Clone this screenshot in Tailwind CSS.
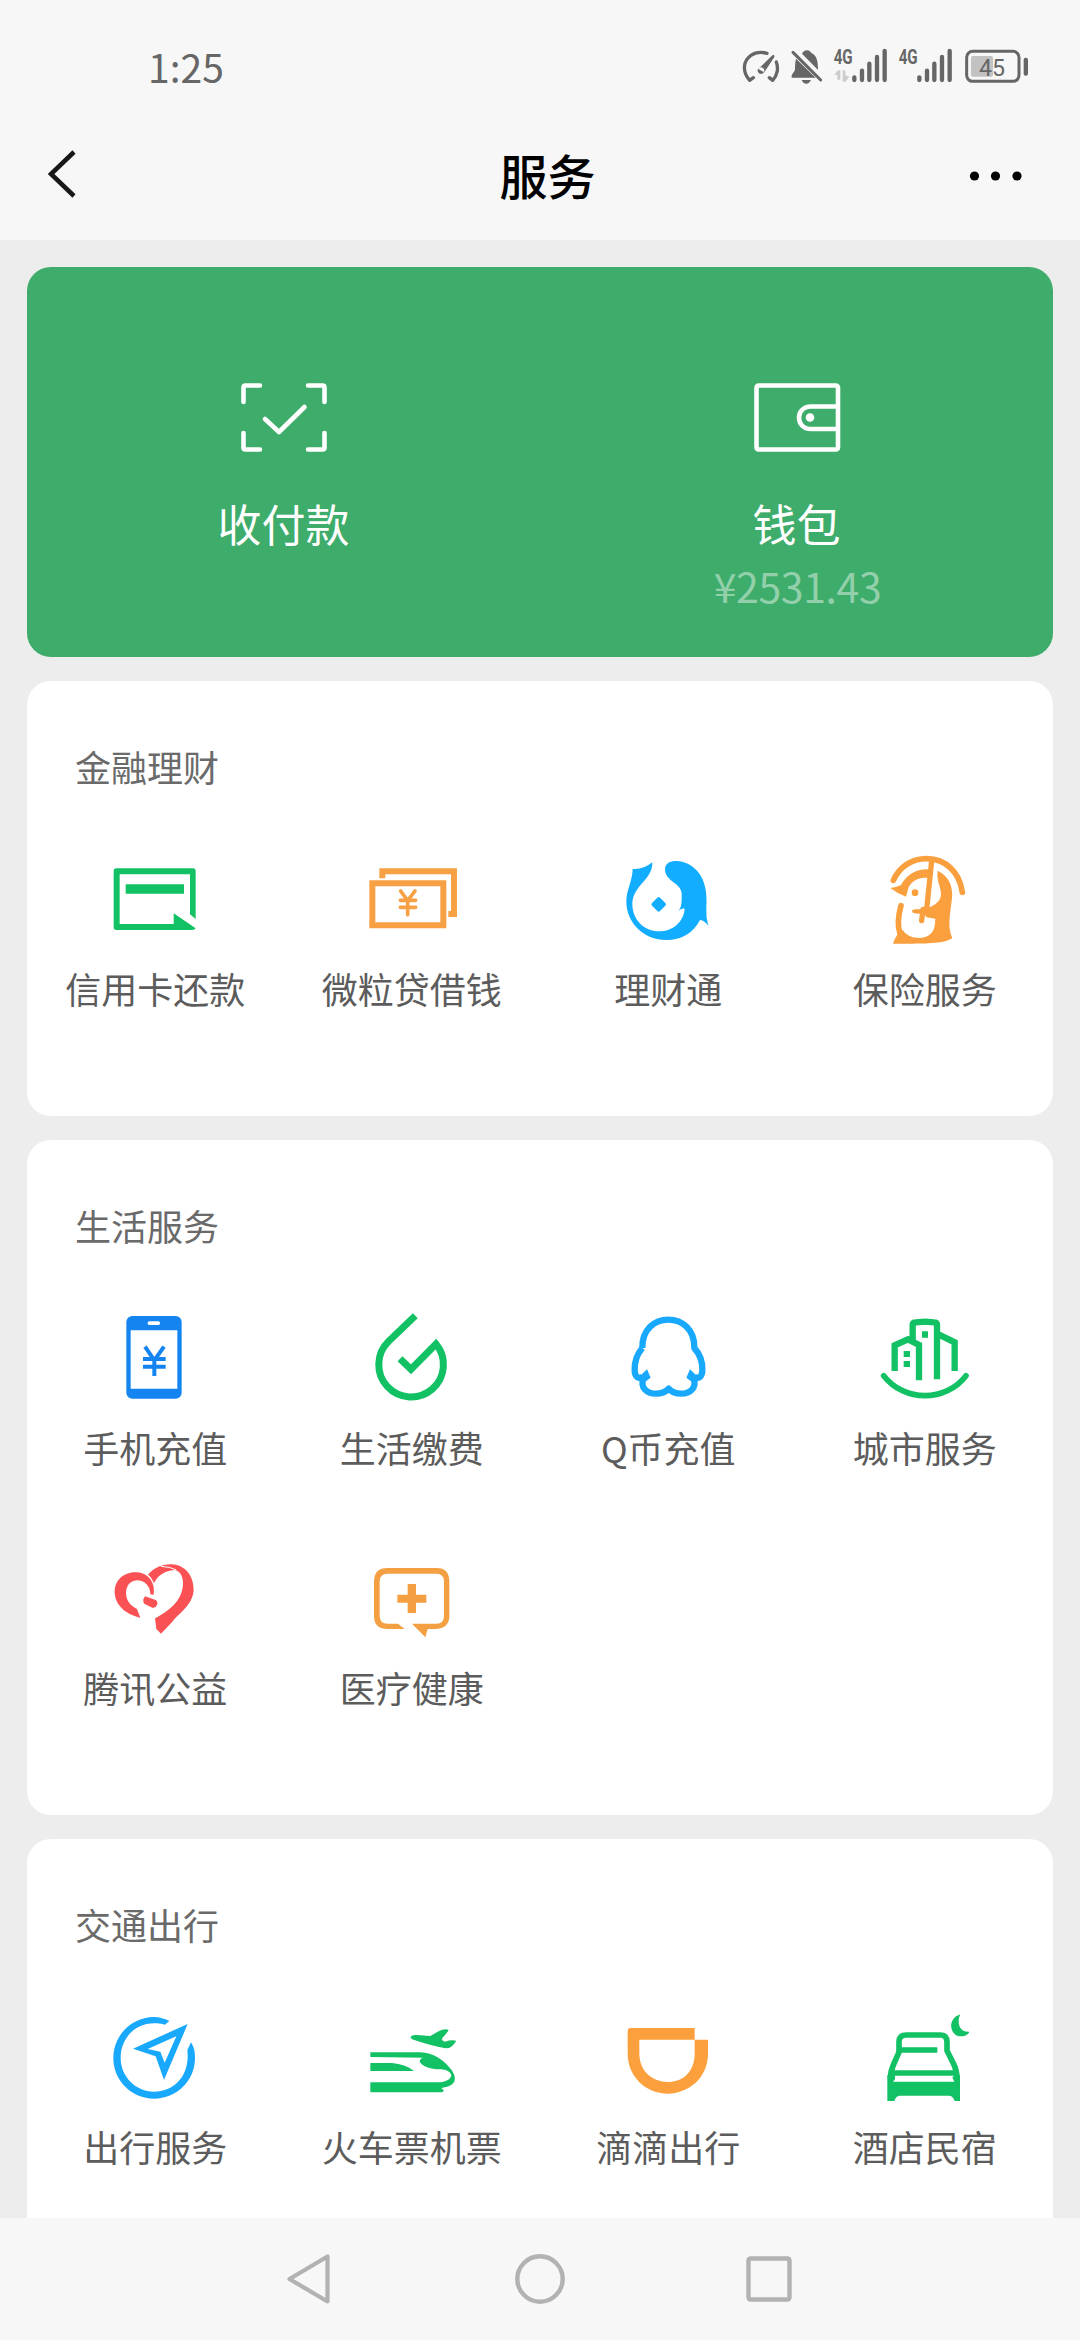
<!DOCTYPE html>
<html lang="zh-CN">
<head>
<meta charset="utf-8">
<title>服务</title>
<script src="https://cdn.jsdelivr.net/npm/@tailwindcss/browser@4"></script>
</head>
<body class="flex h-[2340px] w-[1080px] flex-col overflow-hidden bg-[#ededed] font-['Noto_Sans_CJK_SC',sans-serif]">

<!-- Status bar -->
<div class="flex h-[112px] shrink-0 items-start justify-between bg-[#f7f7f7] pl-[148px] pr-[30px] pt-[30px] text-[#666]">
  <span class="pt-[8px] text-[39px] leading-[56px]">1:25</span>
  <svg class="h-[80px] w-[330px]" viewBox="0 0 990 240" fill="none" stroke="currentColor">
    <path d="M100 143 L89 151 C66 126 69 92 93 76 C106 67 122 65 141 70 M169 96 C176 115 172 137 158 151 L148 143" stroke-width="10" stroke-linecap="round" stroke-linejoin="round"/>
    <path d="M115 117 L158 75 Q165 74 163 81 L133 127Z M123 112a10 10 0 1 0 .1 0Z" fill="currentColor" stroke="none"/>
    <path d="M228 86 Q225 98 225 120 L215 136 V143 H287Z M246 71 C252 58 268 58 273 68 C290 76 294 90 294 120Z M245 150 H273 Q268 161 259 161 Q249 161 245 150Z" fill="currentColor" stroke="none"/>
    <path d="M219 67 L302 150" stroke-width="9" stroke-linecap="round"/>
    <g fill="currentColor" stroke="none" font-family="Roboto" font-weight="700">
      <text x="341" y="101" font-size="62" textLength="57" lengthAdjust="spacingAndGlyphs">4G</text>
      <text x="536" y="101" font-size="62" textLength="57" lengthAdjust="spacingAndGlyphs">4G</text>
    </g>
    <path d="M343 135 L354 121 H361 V149 H352 V135Z M368 121 H376 V136 L388 140 L376 155 H368Z" fill="#cdcdcd" stroke="none"/>
    <path d="M403 142V150M426 122V150M448 101V150M471 81V150M494 63V150M598 142V150M621 122V150M643 101V150M666 81V150M689 63V150" stroke-width="13" stroke-linecap="round"/>
    <rect x="740" y="64" width="157" height="90" rx="18" stroke-width="9"/>
    <rect x="753" y="78" width="66" height="62" rx="6" fill="#c2c2c2" stroke="none"/>
    <rect x="911" y="83" width="13" height="54" rx="6" fill="currentColor" stroke="none"/>
    <text x="777" y="137" font-size="73" fill="currentColor" stroke="none" font-family="Roboto" textLength="78" lengthAdjust="spacingAndGlyphs">45</text>
  </svg>
</div>

<!-- Title bar -->
<header class="flex h-[128px] shrink-0 items-start justify-between bg-[#f7f7f7] px-[40px] pt-[24px] text-black">
  <svg class="h-[80px] w-[80px]" viewBox="40 136 80 80" fill="none" stroke="#181818" stroke-width="4.5"><path d="M74 152 L51 174 L74 196"/></svg>
  <h1 class="pl-[15px] pt-[2px] text-[48px] font-medium leading-[72px]">服务</h1>
  <svg class="h-[80px] w-[80px]" viewBox="960 136 80 80"><circle cx="974.5" cy="176" r="4.6"/><circle cx="995.5" cy="176" r="4.6"/><circle cx="1017" cy="176" r="4.6"/></svg>
</header>

<main class="flex min-h-0 flex-1 flex-col gap-[24px] overflow-hidden px-[27px] pt-[27px]">

  <!-- Pay and wallet -->
  <section class="grid h-[390px] shrink-0 grid-cols-2 rounded-[24px] bg-[#3eac6a] pt-[106px] text-white">
    <div class="flex flex-col items-center">
      <svg class="h-[90px] w-[100px]" viewBox="234 373 100 90" fill="none" stroke="currentColor" stroke-width="4.6" stroke-linecap="round" stroke-linejoin="round">
        <path d="M260 385.500H245.500Q243.500 385.500 243.500 387.500V402M308 385.500H322.500Q324.500 385.500 324.500 387.500V402M243.500 433V447.500Q243.500 449.500 245.500 449.500H260M324.500 433V447.500Q324.500 449.500 322.500 449.500H308" /><path d="M265 419L279 432L304.500 407"/>
      </svg>
      <span class="mt-[28px] text-[44px] leading-[64px]">收付款</span>
    </div>
    <div class="flex flex-col items-center">
      <svg class="h-[90px] w-[100px]" viewBox="747 373 100 90" fill="none" stroke="currentColor" stroke-width="4.600">
        <rect x="756.500" y="385.500" width="81.500" height="64" rx="2"/><path d="M837 406.500H811C795 406.500 795 429 811 429H837"/><circle cx="810" cy="417.500" r="4.300" fill="currentColor" stroke="none"/>
      </svg>
      <span class="mt-[28px] text-[44px] leading-[64px]">钱包</span>
      <span class="pl-[2px] pt-[2px] text-[41px] leading-[56px] tracking-[-0.4px] text-white/45">¥2531.43</span>
    </div>
  </section>

  <!-- Finance -->
  <section class="h-[435px] shrink-0 rounded-[24px] bg-white pt-[65px] text-[#5c5c5c]">
    <h2 class="pl-[48px] text-[36px] leading-[40px] text-[#6a6a6a]">金融理财</h2>
    <div class="mt-[66px] grid grid-cols-4 text-[36px] leading-[40px]">
      <div class="flex flex-col items-center gap-[20px]">
        <svg class="size-[96px]" viewBox="202 396 288 288" fill="#12c164"><path d="M230 445H460Q468 445 468 453V597L451 583V463H240V612H402V580L468 625Q465 630 458 630H230Q222 630 222 622V453Q222 445 230 445Z"/><path d="M258 493H433V521H258Z"/></svg>
        <span>信用卡还款</span>
      </div>
      <div class="flex flex-col items-center gap-[20px]">
        <svg class="size-[96px]" viewBox="971 396 288 288" fill="none" stroke="#f7a044" stroke-width="18"><path d="M996 490H1209V616H996ZM1026 475V454H1241V582H1224"/><path stroke-width="11" stroke-linecap="round" d="M1081 513L1102 542L1124 513M1080 541H1126M1080 562H1126M1102 545V584"/></svg>
        <span>微粒贷借钱</span>
      </div>
      <div class="flex flex-col items-center gap-[20px]">
        <svg class="size-[96px]" viewBox="181 66 288 288" fill="#12adff"><path d="M219 117Q250 120 278 97C280 150 219 165 218 222C218 270 255 304 297 304C340 304 372 275 375 236Q366 234 357 242C367 230 366 215 366 190C364 158 316 155 316 117C318 85 365 90 390 104C440 135 443 190 440 238Q438 262 446 287Q435 272 421 270C400 310 365 330 320 330C250 330 200 275 200 215C200 180 218 155 219 117Z"/><path d="M293 203Q297 199 301 203L317 219Q321 223 317 227L301 243Q297 247 293 243L277 227Q273 223 277 219Z"/></svg>
        <span>理财通</span>
      </div>
      <div class="flex flex-col items-center gap-[20px]">
        <svg class="size-[96px]" viewBox="950 66 288 288" fill="#fa9f3e"><g fill="none" stroke="#fa9f3e" stroke-linecap="round"><path stroke-width="17" d="M999 151C1018 109 1055 86 1099 86C1157 86 1198 128 1206 187M1022 227C1012 262 1012 290 1019 310"/><path stroke-width="16" d="M1114 92L1099 238M1088 238L1084 272"/></g><path d="M990 174Q1006 173 1022 165C1040 132 1070 116 1105 118L1102 144C1072 140 1048 158 1043 178L1037 200Q1010 190 990 174ZM1132 122C1170 140 1178 175 1175 205C1170 250 1160 292 1176 324C1150 342 1100 341 998 341Q1002 327 1012 313L1028 300C1042 328 1092 330 1110 312C1124 300 1124 282 1125 266L1098 262L1092 250Q1056 254 1055 243Q1056 236 1074 238C1120 236 1143 215 1142 190C1140 165 1128 152 1132 122Z"/><circle cx="1064" cy="188" r="10"/></svg>
        <span>保险服务</span>
      </div>
    </div>
  </section>

  <!-- Daily life -->
  <section class="h-[675px] shrink-0 rounded-[24px] bg-white pt-[65px] text-[#5c5c5c]">
    <h2 class="pl-[48px] text-[36px] leading-[40px] text-[#6a6a6a]">生活服务</h2>
    <div class="mt-[66px] grid grid-cols-4 gap-y-[84px] text-[36px] leading-[40px]">
      <div class="flex flex-col items-center gap-[20px]">
        <svg class="size-[96px]" viewBox="172 63 288 288"><rect x="230" y="78" width="166" height="248" rx="18" fill="#1485f0"/><path d="M243 121H383V296H243Z" fill="#fff"/><rect x="294" y="94" width="37" height="11" rx="5" fill="#fff"/><path d="M286 170L314 211L343 170M280 207H348M280 230H348M314 208V258" fill="none" stroke="#1485f0" stroke-width="12"/></svg>
        <span>手机充值</span>
      </div>
      <div class="flex flex-col items-center gap-[20px]">
        <svg class="size-[96px]" viewBox="941 63 288 288" fill="none" stroke="#12c164" stroke-width="21"><path d="M1095 77L1015 154A97 97 0 1 0 1157 162L1082 238L1049 206"/></svg>
        <span>生活缴费</span>
      </div>
      <div class="flex flex-col items-center gap-[20px]">
        <svg class="size-[96px]" viewBox="181 63 288 288" fill="none" stroke="#19a9fc" stroke-width="19" stroke-linejoin="round"><path d="M248 174C247 118 285 89 326 89C367 89 405 118 404 174C424 196 429 220 428 242C427 262 416 268 404 260M248 174C229 196 224 220 225 242C226 262 237 268 249 260M402 262C412 294 392 311 364 311C347 311 336 305 327 296C318 305 307 311 289 311C261 311 241 294 251 262"/><path d="M237 262L262 238L273 263L256 276ZM416 262L391 238L380 263L397 276Z" fill="#19a9fc" stroke="none"/></svg>
        <span>Q币充值</span>
      </div>
      <div class="flex flex-col items-center gap-[20px]">
        <svg class="size-[96px]" viewBox="950 63 288 288" fill="none" stroke="#12c164" stroke-width="19"><path d="M1057 150V104Q1057 97 1066 97L1095 95L1121 97Q1130 97 1130 104V268M1003 243V166L1043 148L1076 165V271M1136 134L1183 157V243"/><path d="M970 257C1032 337 1156 337 1217 257" stroke-width="17" stroke-linecap="round"/><path d="M1030 183H1049V201H1030ZM1030 213H1049V231H1030ZM1085 124H1103V143H1085Z" fill="#12c164" stroke="none"/></svg>
        <span>城市服务</span>
      </div>
      <div class="flex flex-col items-center gap-[20px]">
        <svg class="size-[96px]" viewBox="172 33 288 288" fill="#fa5254"><path d="M272 233C225 222 195 192 195 155C196 112 232 93 266 97C298 102 318 130 312 164L302 163C302 138 285 121 262 121C240 122 229 140 229 160C230 186 246 198 262 207Z"/><path d="M286 169L318 180Q326 186 322 195Q318 205 308 203L285 192Q279 188 281 178Z"/><path d="M295 104C315 80 345 72 366 73C410 76 432 110 432 150C430 195 385 222 368 245L334 281L320 267L316 235C352 215 400 185 400 128C400 106 388 92 375 90C345 92 322 108 313 130Q306 112 295 104Z"/><path d="M334 79Q362 80 380 90" fill="none" stroke="#fff" stroke-width="3"/></svg>
        <span>腾讯公益</span>
      </div>
      <div class="flex flex-col items-center gap-[20px]">
        <svg class="size-[96px]" viewBox="941 33 288 288" fill="#f4a042"><path d="M1043 251H1012Q988 251 988 228V124Q988 101 1012 101H1158Q1181 101 1181 124V228Q1181 251 1158 251H1085L1125 292L1132 267H1158Q1197 264 1197 228V124Q1197 84 1158 84H1012Q971 84 971 124V228Q971 267 1012 267H1063Z"/><path d="M1072 132H1097V164H1128V188H1097V219H1072V188H1041V164H1072Z"/></svg>
        <span>医疗健康</span>
      </div>
    </div>
  </section>

  <!-- Transport -->
  <section class="h-[675px] shrink-0 rounded-[24px] bg-white pt-[65px] text-[#5c5c5c]">
    <h2 class="pl-[48px] text-[36px] leading-[40px] text-[#6a6a6a]">交通出行</h2>
    <div class="mt-[66px] grid grid-cols-4 text-[36px] leading-[40px]">
      <div class="flex flex-col items-center gap-[20px]">
        <svg class="size-[96px]" viewBox="172 60 288 288" fill="#19a9fc"><path d="M359 93L346 104C265 84 213 140 213 204C213 260 258 305 313 305C372 305 422 258 413 180L424 157C435 175 436 190 436 204C436 272 381 326 313 326C246 326 191 272 191 204C191 136 246 81 313 81Q338 82 359 93Z"/><path fill-rule="evenodd" d="M250 176L414 102L343 270L318 199ZM294 177L332 185L345 218L380 139Z"/></svg>
        <span>出行服务</span>
      </div>
      <div class="flex flex-col items-center gap-[20px]">
        <svg class="size-[96px]" viewBox="941 60 288 288" fill="#12c164"><path d="M960 187H1110C1150 188 1178 210 1198 233C1224 262 1215 284 1190 290L1173 294L1181 302L1175 307H960V277H1170C1198 274 1208 258 1200 250C1192 240 1180 238 1170 238C1140 238 1110 228 1108 212Q1110 205 1118 203L960 201ZM960 219H1025Q1065 222 1091 243H960Z"/><path d="M1080 142Q1085 133 1100 135L1140 138L1166 123Q1184 114 1195 120Q1192 127 1176 144Q1172 153 1184 155Q1203 148 1218 152Q1205 175 1186 175Q1150 170 1085 148Z"/></svg>
        <span>火车票机票</span>
      </div>
      <div class="flex flex-col items-center gap-[20px]">
        <svg class="size-[96px]" viewBox="181 60 288 288" fill="#fca03e"><path d="M213 114H405V149H239V190C239 246 280 276 324 276C370 276 407 245 405 185V149H445V190C445 266 385 311 324 311C260 311 204 262 204 190V123Q204 114 213 114Z"/></svg>
        <span>滴滴出行</span>
      </div>
      <div class="flex flex-col items-center gap-[20px]">
        <svg class="size-[96px]" viewBox="950 60 288 288" fill="#12c164"><path d="M1200 73C1164 85 1166 125 1190 137C1210 143 1225 134 1227 125C1198 128 1188 98 1200 73Z"/><path d="M1131 180H1016V156Q1016 135 1038 135H1140Q1160 135 1160 156V182L1180 222Q1190 242 1190 265M1018 182L999 225Q990 245 990 265M995 249H1186" fill="none" stroke="#12c164" stroke-width="17"/><path d="M981 333V255H1004V268L998 275H1182L1176 262L1184 255H1199V333H1183Q1178 317 1165 317H1018Q1006 318 1002 333Z"/></svg>
        <span>酒店民宿</span>
      </div>
    </div>
  </section>
</main>

<!-- System navigation -->
<nav class="flex h-[122px] shrink-0 items-start justify-center gap-[170px] bg-[#f7f7f7] pt-[31px] text-[#b2b2b2]">
  <svg class="size-[60px]" viewBox="280 2249 60 60" fill="none" stroke="currentColor" stroke-width="4.200" stroke-linejoin="round"><path d="M327.500 2256.500V2301.500L289.500 2279Z"/></svg>
  <svg class="size-[60px]" viewBox="510 2249 60 60" fill="none" stroke="currentColor" stroke-width="4.400"><circle cx="540" cy="2279" r="22.700"/></svg>
  <svg class="size-[60px]" viewBox="740 2249 60 60" fill="none" stroke="currentColor" stroke-width="4.400"><rect x="748.500" y="2258.500" width="41" height="41" rx="2"/></svg>
</nav>
</body>
</html>
